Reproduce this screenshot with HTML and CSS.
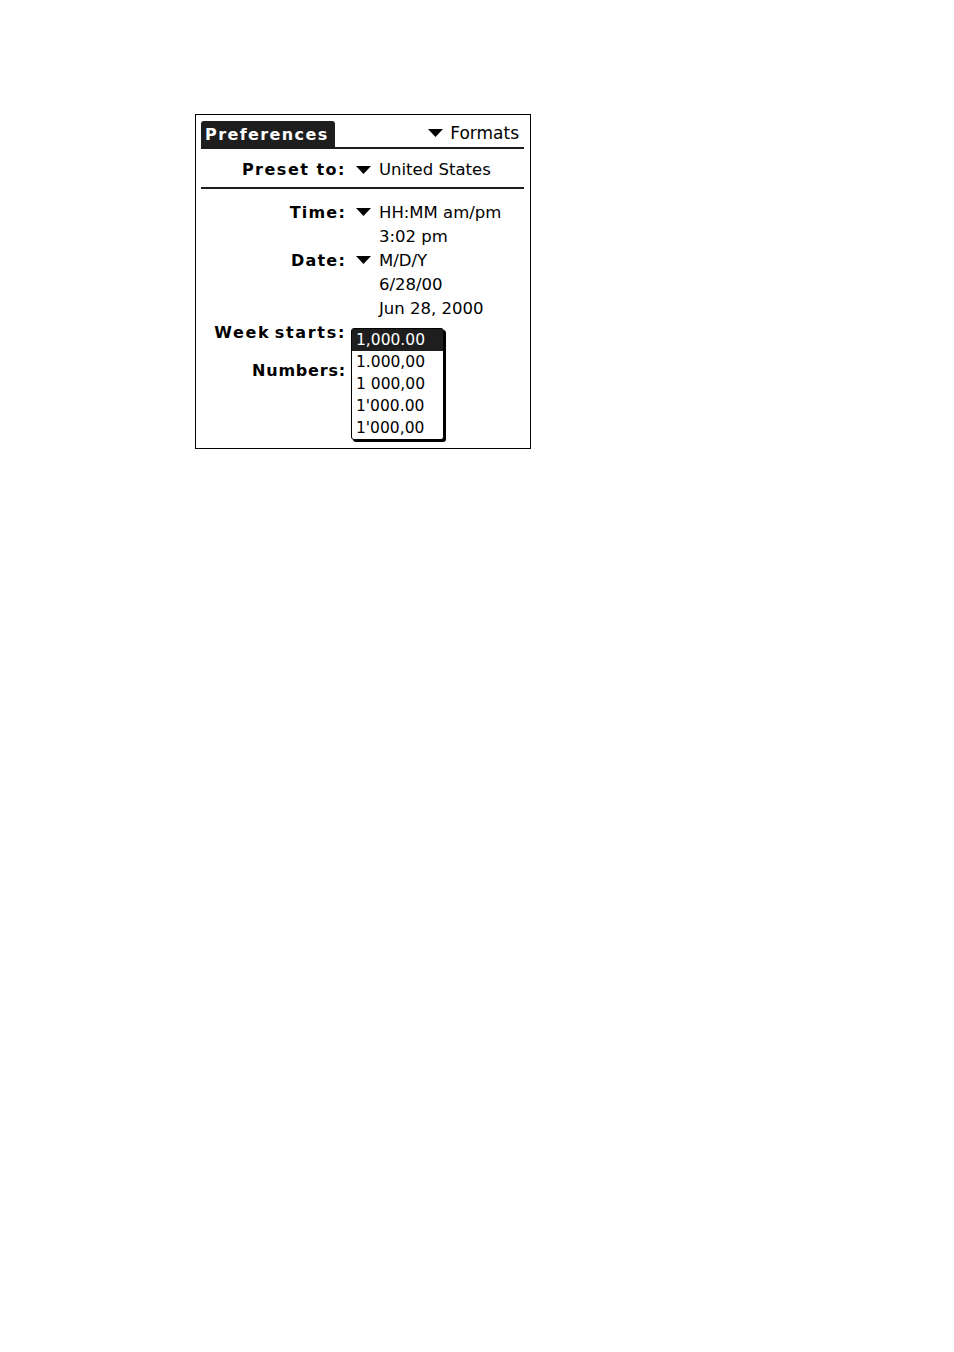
FILE: index.html
```html
<!DOCTYPE html>
<html>
<head>
<meta charset="utf-8">
<link rel="stylesheet" href="styles.css">
</head>
<body>
<div class="screen">
  <div class="titlebar">
    <div class="tab">Preferences</div>
    <div class="trigger formats">
      <svg class="tri" width="15" height="8" viewBox="0 0 15 8"><polygon points="0,0 15,0 7.5,8" fill="#000"/></svg>
      <span>Formats</span>
    </div>
  </div>
  <div class="preset row">
    <div class="label wide">Preset to:</div>
    <svg class="tri" width="15" height="8" viewBox="0 0 15 8"><polygon points="0,0 15,0 7.5,8" fill="#000"/></svg>
    <div class="value">United States</div>
  </div>
  <div class="form">
    <div class="row">
      <div class="label">Time:</div>
      <svg class="tri" width="15" height="8" viewBox="0 0 15 8"><polygon points="0,0 15,0 7.5,8" fill="#000"/></svg>
      <div class="value">HH:MM am/pm</div>
    </div>
    <div class="row">
      <div class="label"></div>
      <div class="spacer"></div>
      <div class="value">3:02 pm</div>
    </div>
    <div class="row">
      <div class="label">Date:</div>
      <svg class="tri" width="15" height="8" viewBox="0 0 15 8"><polygon points="0,0 15,0 7.5,8" fill="#000"/></svg>
      <div class="value">M/D/Y</div>
    </div>
    <div class="row">
      <div class="label"></div>
      <div class="spacer"></div>
      <div class="value">6/28/00</div>
    </div>
    <div class="row">
      <div class="label"></div>
      <div class="spacer"></div>
      <div class="value">Jun 28, 2000</div>
    </div>
    <div class="row">
      <div class="label week">Week starts:</div>
    </div>
    <div class="row numbers">
      <div class="label narrow">Numbers:</div>
    </div>
  </div>
  <ul class="popup">
    <li class="selected">1,000.00</li>
    <li>1.000,00</li>
    <li>1 000,00</li>
    <li>1'000.00</li>
    <li>1'000,00</li>
  </ul>
</div>
</body>
</html>
```

FILE: styles.css
```css
html, body {
  margin: 0;
  padding: 0;
  background: #fff;
}

body {
  font-family: "DejaVu Sans", sans-serif;
  color: #000;
}

.screen {
  position: relative;
  box-sizing: border-box;
  margin: 114px 0 0 195px;
  width: 336px;
  height: 335px;
  border: 1px solid #000;
  padding: 6px 6px 0 5px;
}

.titlebar {
  display: flex;
  align-items: stretch;
  justify-content: space-between;
  border-bottom: 2px solid #1c1c1c;
  height: 26px;
}

.tab {
  width: 134px;
  box-sizing: border-box;
  background: #1e1e1e;
  color: #fff;
  font-weight: bold;
  font-size: 16px;
  letter-spacing: 1.4px;
  line-height: 28px;
  padding-left: 4px;
  border-radius: 3px 3px 0 0;
  white-space: nowrap;
}

.trigger {
  display: flex;
  align-items: center;
  gap: 7px;
  padding-right: 5px;
  font-size: 17px;
  padding-bottom: 2px;
}

.trigger .tri {
  margin-right: 0;
}

.row {
  display: flex;
  align-items: center;
  height: 24px;
  font-size: 16.5px;
}

.label {
  width: 145px;
  flex: none;
  text-align: right;
  font-weight: bold;
  font-size: 16px;
  letter-spacing: 1.2px;
  white-space: nowrap;
  margin-right: 10px;
}

.label.wide {
  letter-spacing: 1.5px;
}

.label.week {
  letter-spacing: 1.7px;
  word-spacing: -3px;
}

.label.narrow {
  letter-spacing: 0.8px;
}

.tri {
  flex: none;
  display: block;
  margin-right: 8px;
}

.spacer {
  width: 15px;
  flex: none;
  margin-right: 8px;
}

.value {
  white-space: nowrap;
}

.preset {
  box-sizing: border-box;
  height: 40px;
  padding-top: 3px;
  border-bottom: 2px solid #1c1c1c;
}

.form {
  padding-top: 11px;
}

.numbers {
  margin-top: 14px;
}

.popup {
  position: absolute;
  left: 155px;
  top: 213px;
  width: 93px;
  box-sizing: border-box;
  margin: 0;
  padding: 0;
  list-style: none;
  background: #fff;
  border: 1px solid #000;
  border-radius: 3px;
  box-shadow: 2px 2px 0 #000;
  font-size: 15.5px;
}

.popup li {
  height: 22px;
  line-height: 22px;
  padding-left: 4px;
}

.popup li.selected {
  background: #1e1e1e;
  color: #fff;
}
```
